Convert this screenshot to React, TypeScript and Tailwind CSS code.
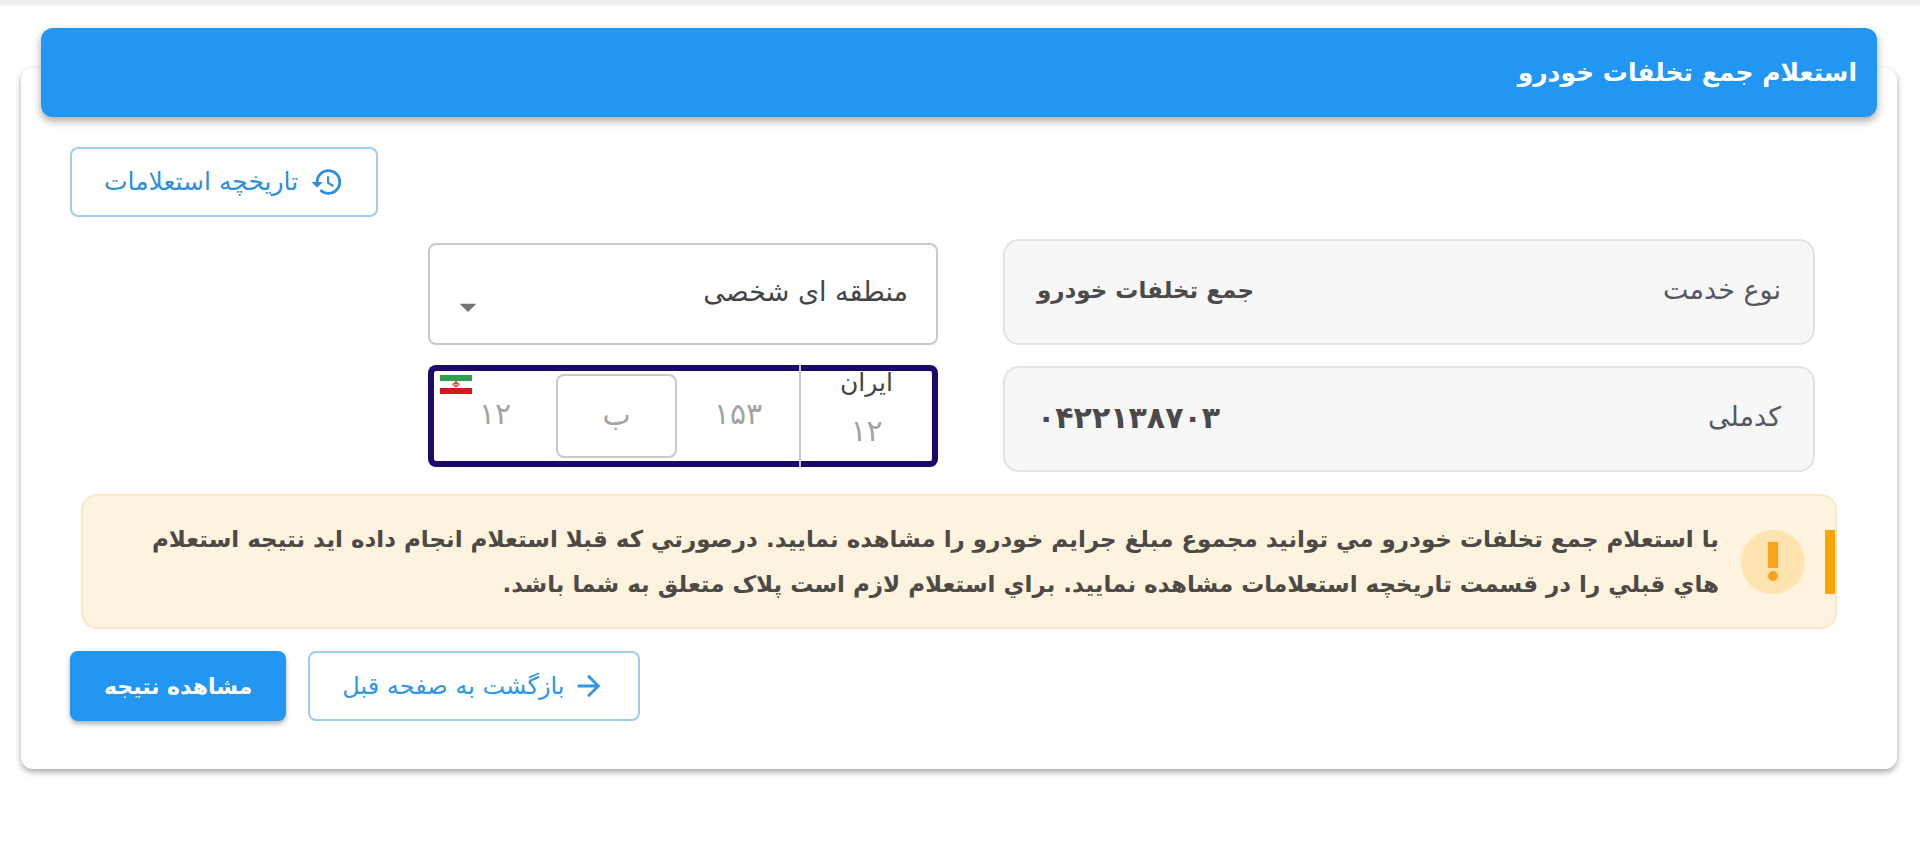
import { useState } from 'react';
import { MdArrowDropDown, MdArrowForward, MdHistory } from 'react-icons/md';

const PLATE_LETTERS = ['ب', 'ج', 'د', 'س', 'ص', 'ط', 'ق', 'ل', 'م', 'ن', 'و', 'ه', 'ی'];
const PLATE_TYPES = ['منطقه ای شخصی', 'منطقه آزاد', 'موتور سیکلت'];

interface InfoRowProps {
  label: string;
  value: string;
  valueClass: string;
}

function InfoRow({ label, value, valueClass }: InfoRowProps) {
  return (
    <div className="flex h-[106px] items-center justify-between rounded-2xl border-2 border-[#e3e3e3] bg-[#f7f7f7] px-8 pb-1">
      <dt className="text-[27px] text-[#55595f]">{label}</dt>
      <dd className={valueClass}>{value}</dd>
    </div>
  );
}

function IranFlag() {
  return (
    <svg className="absolute top-1 left-[6px] h-[19px] w-8" viewBox="0 0 32 19" aria-hidden="true">
      <rect width="32" height="6" fill="#2f9e4f" />
      <rect y="6" width="32" height="7" fill="#fff" />
      <rect y="13" width="32" height="6" fill="#d3191f" />
      <path d="M16 5.500v7M16 6.500l-3 3l3 2.500l3-2.500z" fill="none" stroke="#d94a4a" strokeWidth="1.200" />
    </svg>
  );
}

function PlateInput() {
  const [letter, setLetter] = useState('ب');
  const field = 'w-0 min-w-0 bg-transparent pb-1 text-center text-[30px] leading-10 outline-none placeholder:text-[#a3a3a3]';

  return (
    <div className="flex h-[102px]" dir="ltr">
      <div className="relative flex flex-1 items-center rounded-l-lg border-6 border-r-0 border-[#1a0a6b]">
        <IranFlag />
        <input aria-label="دو رقم اول پلاک" placeholder="۱۲" className={`${field} flex-1`} />
        <select
          aria-label="حرف پلاک"
          value={letter}
          onChange={(e) => setLetter(e.target.value)}
          className="h-[84px] w-[121px] appearance-none rounded-lg border-2 border-[#c9c9c9] bg-white pb-1 text-center text-[30px] text-[#a3a3a3] outline-none"
        >
          {PLATE_LETTERS.map((l) => (
            <option key={l}>{l}</option>
          ))}
        </select>
        <input aria-label="سه رقم پلاک" placeholder="۱۵۳" className={`${field} flex-1`} />
      </div>
      <div className="w-[2px] bg-[#c9c9c9]" />
      <div className="flex w-[137px] flex-col items-center overflow-hidden rounded-r-lg border-6 border-l-0 border-[#1a0a6b]">
        <label htmlFor="plate-region" className="text-[25px] leading-6 text-[#444]">
          ایران
        </label>
        <input id="plate-region" placeholder="۱۲" className={`${field} mt-4 min-w-full`} />
      </div>
    </div>
  );
}

export default function App() {
  const [plateType, setPlateType] = useState(PLATE_TYPES[0]);

  return (
    <div dir="rtl" className="min-h-screen bg-white font-['DejaVu_Sans',sans-serif]">
      {/* bottom edge of the app bar */}
      <div className="h-1 bg-[#ebeef1] shadow-[0_1px_4px_rgba(0,0,0,0.08)]" />

      <main className="mt-16 mr-[23px] ml-[21px] rounded-xl bg-white pb-12 shadow-[0_3px_6px_rgba(0,0,0,0.35)]">
        <header className="relative -top-10 mx-5 -mb-[10px] flex h-[89px] items-center rounded-xl bg-[#2196f3] px-5 shadow-[0_4px_8px_rgba(0,0,0,0.35)]">
          <h1 className="text-[25px] font-bold text-white">استعلام جمع تخلفات خودرو</h1>
        </header>

        <div className="flex justify-end px-[49px]">
          <button type="button" className="flex h-[70px] items-center gap-3 rounded-lg border-2 border-[#9fcdf0] px-8 text-[25px] text-[#2f8fd8]">
            <MdHistory size={34} />
            تاریخچه استعلامات
          </button>
        </div>

        <div className="mt-[22px] grid grid-cols-[812fr_510fr_293fr] gap-x-[65px] pr-[82px] pl-[49px]">
          <dl className="flex min-w-0 flex-col gap-[21px]">
            <InfoRow label="نوع خدمت" value="جمع تخلفات خودرو" valueClass="text-[23px] font-bold text-[#4a4a4a]" />
            <InfoRow label="کدملی" value="۰۴۲۲۱۳۸۷۰۳" valueClass="text-[30px] font-bold text-[#4a4a4a]" />
          </dl>
          <div className="flex min-w-0 flex-col gap-5 pt-1">
            <div className="relative">
              <select
                aria-label="نوع پلاک"
                value={plateType}
                onChange={(e) => setPlateType(e.target.value)}
                className="h-[102px] w-full appearance-none rounded-lg border-2 border-[#c9c9c9] bg-white px-7 pb-1 text-[27px] text-[#444] outline-none"
              >
                {PLATE_TYPES.map((t) => (
                  <option key={t}>{t}</option>
                ))}
              </select>
              <MdArrowDropDown size={40} className="pointer-events-none absolute top-11 left-5 text-[#757575]" />
            </div>
            <PlateInput />
          </div>
        </div>

        <div role="alert" className="mt-[22px] mr-[60px] ml-[60px] flex h-[135px] items-center rounded-2xl border-2 border-[#fbe8c8] bg-[#fef3df]">
          <span className="h-16 w-[10px] shrink-0 bg-[#ffa500]" />
          <span className="mr-5 flex size-16 shrink-0 items-center justify-center rounded-full bg-[#ffe3b0]">
            <svg width="12" height="40" viewBox="0 0 12 40" fill="#f9a51a" aria-hidden="true">
              <rect x="1" width="10" height="26" />
              <circle cx="6" cy="34" r="5" />
            </svg>
          </span>
          <p className="mr-[22px] ml-16 text-[23px] leading-[45px] font-bold text-[#4d4a45]">
            با استعلام جمع تخلفات خودرو مي توانيد مجموع مبلغ جرايم خودرو را مشاهده نماييد. درصورتي که قبلا استعلام انجام داده ايد نتيجه استعلام هاي قبلي را در قسمت تاريخچه استعلامات مشاهده نماييد. براي استعلام لازم است پلاک متعلق به شما باشد.
          </p>
        </div>

        <div className="mt-[22px] flex justify-end gap-[22px] px-[49px]">
          <button type="button" className="flex h-[70px] items-center gap-2 rounded-lg border-2 border-[#9fcdf0] px-8 text-[24px] text-[#2f96e8]">
            <MdArrowForward size={34} />
            بازگشت به صفحه قبل
          </button>
          <button type="submit" className="h-[70px] rounded-lg bg-[#2196f3] px-[34px] text-[22px] font-bold text-white shadow-[0_3px_5px_rgba(0,0,0,0.3)]">
            مشاهده نتیجه
          </button>
        </div>
      </main>
    </div>
  );
}
